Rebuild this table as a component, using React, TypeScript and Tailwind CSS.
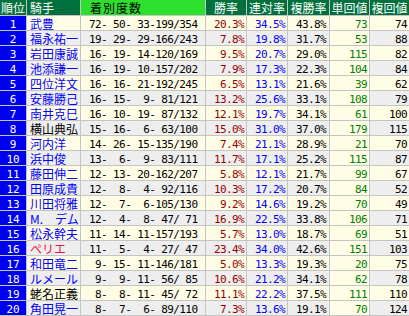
import React from "react";

type Row = [number, string, string, string, string, string, string, string, string?];

const rows: Row[] = [
  [1, "武豊", "72- 50- 33-199/354", "20.3%", "34.5%", "43.8%", "73", "74"],
  [2, "福永祐一", "19- 29- 29-166/243", "7.8%", "19.8%", "31.7%", "53", "88"],
  [3, "岩田康誠", "16- 19- 14-120/169", "9.5%", "20.7%", "29.0%", "115", "82"],
  [4, "池添謙一", "16- 19- 10-157/202", "7.9%", "17.3%", "22.3%", "104", "84"],
  [5, "四位洋文", "16- 16- 21-192/245", "6.5%", "13.1%", "21.6%", "39", "62"],
  [6, "安藤勝己", "16- 15-  9- 81/121", "13.2%", "25.6%", "33.1%", "108", "79"],
  [7, "南井克巳", "16- 10- 19- 87/132", "12.1%", "19.7%", "34.1%", "61", "100"],
  [8, "横山典弘", "15- 16-  6- 63/100", "15.0%", "31.0%", "37.0%", "179", "115", "black"],
  [9, "河内洋", "14- 26- 15-135/190", "7.4%", "21.1%", "28.9%", "21", "70"],
  [10, "浜中俊", "13-  6-  9- 83/111", "11.7%", "17.1%", "25.2%", "115", "87"],
  [11, "藤田伸二", "12- 13- 20-162/207", "5.8%", "12.1%", "21.7%", "99", "67"],
  [12, "田原成貴", "12-  8-  4- 92/116", "10.3%", "17.2%", "20.7%", "84", "52"],
  [13, "川田将雅", "12-  7-  6-105/130", "9.2%", "14.6%", "19.2%", "70", "49"],
  [14, "M.\u3000デム", "12-  4-  8- 47/ 71", "16.9%", "22.5%", "33.8%", "106", "71"],
  [15, "松永幹夫", "11- 14- 11-157/193", "5.7%", "13.0%", "18.7%", "69", "51"],
  [16, "ペリエ", "11-  5-  4- 27/ 47", "23.4%", "34.0%", "42.6%", "151", "103", "red"],
  [17, "和田竜二", " 9- 15- 11-146/181", "5.0%", "13.3%", "19.3%", "20", "75"],
  [18, "ルメール", " 9-  9- 11- 56/ 85", "10.6%", "21.2%", "34.1%", "62", "78"],
  [19, "蛯名正義", " 8-  8- 11- 45/ 72", "11.1%", "22.2%", "37.5%", "111", "110", "black"],
  [20, "角田晃一", " 8-  7-  6- 89/110", "7.3%", "13.6%", "19.1%", "70", "124"],
];

const jp = { fontFamily: '"Noto Sans CJK JP", "Noto Sans", sans-serif' };
const mono = { fontFamily: '"DejaVu Sans Mono", "Liberation Mono", monospace' };

export default function App() {
  return (
    <div className="w-[409px] h-[316px] bg-white overflow-hidden">
      <div className="grid grid-cols-[26px_53px_124px_40px_40px_41px_39px_39px] grid-rows-[15px_repeat(20,14px)] gap-px bg-[#c4c4c4] pb-px text-[12px]" style={jp}>
        <div className="bg-[#00703c] text-white flex items-center justify-center leading-[12px]">順位</div>
        <div className="bg-[#00703c] text-white flex items-center pl-[3px] leading-[12px]">騎手</div>
        <div className="bg-[#2ee02e] text-black flex items-center pl-[9px] leading-[12px] tracking-[1px]">着別度数</div>
        <div className="bg-[#00703c] text-white flex items-center justify-center leading-[12px]">勝率</div>
        <div className="bg-[#00703c] text-white flex items-center justify-center leading-[12px]">連対率</div>
        <div className="bg-[#00703c] text-white flex items-center justify-center leading-[12px]">複勝率</div>
        <div className="bg-[#00703c] text-white flex items-center justify-center leading-[12px]">単回値</div>
        <div className="bg-[#00703c] text-white flex items-center justify-center leading-[12px]">複回値</div>
        {rows.map((r) => {
          const odd = r[0] % 2 === 1;
          const bg = odd ? "bg-[#fffde6]" : "bg-[#eeeeee]";
          const nameColor = r[8] === "black" ? "text-black" : r[8] === "red" ? "text-[#f0103c]" : "text-[#0000ff]";
          return (
            <React.Fragment key={r[0]}>
              <div className="bg-[#0000f0] text-white flex items-center justify-center pt-[2px] text-[11px] leading-[11px]" style={mono}>{r[0]}</div>
              <div className={`${bg} ${nameColor} flex items-center pl-[3px] pt-[2px] whitespace-pre leading-[12px]`}>{r[1]}</div>
              <div className={`${bg} text-black flex items-center pl-[8px] pt-[2px] whitespace-pre text-[11px] tracking-[-0.6px] leading-[11px]`} style={mono}>{r[2]}</div>
              <div className={`${bg} text-[#990000] flex items-center justify-end pr-[2px] pt-[2px] text-[11px] tracking-[-0.6px] leading-[11px]`} style={mono}>{r[3]}</div>
              <div className={`${bg} text-[#0000ff] flex items-center justify-end pr-[2px] pt-[2px] text-[11px] tracking-[-0.6px] leading-[11px]`} style={mono}>{r[4]}</div>
              <div className={`${bg} text-black flex items-center justify-end pr-[3px] pt-[2px] text-[11px] tracking-[-0.6px] leading-[11px]`} style={mono}>{r[5]}</div>
              <div className="bg-[#fffde6] text-[#008000] flex items-center justify-end pr-[2px] pt-[2px] text-[11px] tracking-[-0.6px] leading-[11px]" style={mono}>{r[6]}</div>
              <div className={`${bg} text-black flex items-center justify-end pr-[2px] pt-[2px] text-[11px] tracking-[-0.6px] leading-[11px]`} style={mono}>{r[7]}</div>
            </React.Fragment>
          );
        })}
      </div>
    </div>
  );
}
